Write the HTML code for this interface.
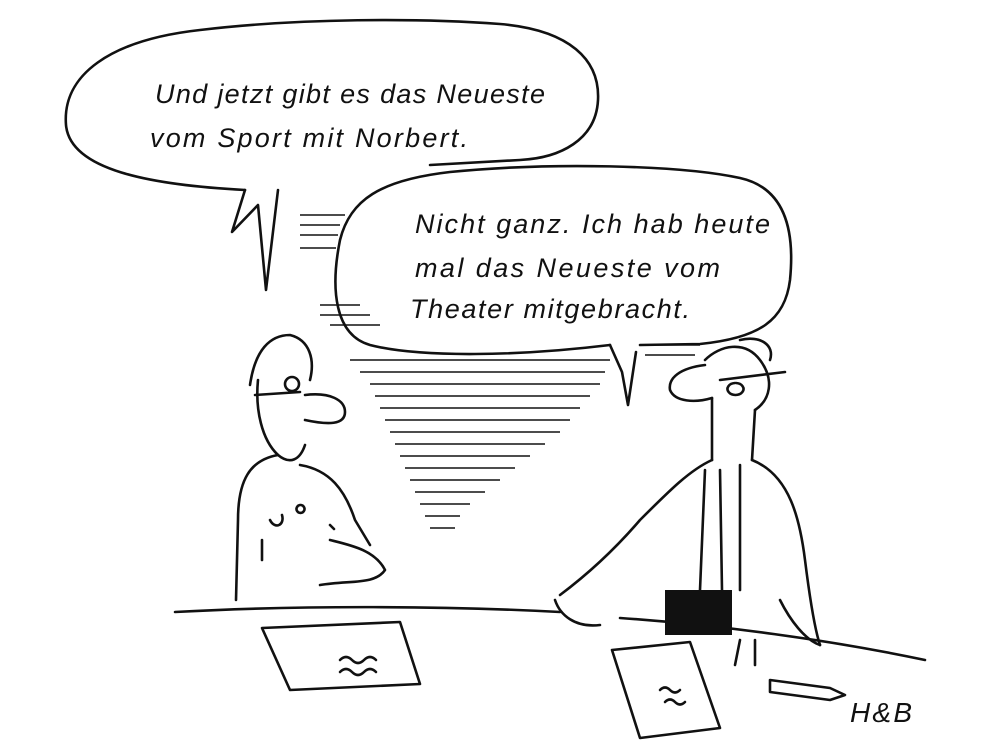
<!DOCTYPE html>
<html><head><meta charset="utf-8"><style>
html,body{margin:0;padding:0;background:#fff}
svg{display:block}
text{font-family:"Liberation Sans",sans-serif;font-style:italic;fill:#111}
</style></head><body>
<svg width="1000" height="751" viewBox="0 0 1000 751" xmlns="http://www.w3.org/2000/svg">
<g fill="none" stroke="#111" stroke-width="2.6" stroke-linecap="round" stroke-linejoin="round">
<!-- bubble 1 -->
<path d="M245,190 C150,185 70,170 66,125 C62,75 110,40 200,30 C300,18 420,18 500,24 C570,30 600,60 598,100 C596,140 560,158 520,160 L430,165"/>
<path d="M245,190 L232,232 L258,205 L266,290 L278,190"/>
<!-- bubble 2 -->
<path d="M610,345 C520,356 420,358 370,345 C335,335 330,290 340,240 C350,200 380,180 450,172 C550,162 680,165 740,178 C785,188 795,230 790,280 C785,320 760,338 700,344 L640,345"/>
<path d="M610,345 L622,372 L628,405 L636,352"/>
<!-- woman -->
<path d="M250,385 C255,350 270,335 290,335 C310,340 315,360 310,380"/>
<path d="M258,380 C255,410 262,440 278,455 C290,465 300,460 305,445"/>
<path d="M305,395 C330,392 345,400 345,412 C345,425 328,425 305,420"/>
<circle cx="292" cy="384" r="7"/>
<path d="M255,395 L300,392"/>
<path d="M278,455 C250,460 238,480 238,520 L236,600"/>
<path d="M300,465 C330,470 345,490 355,520 L370,545"/>
<path d="M330,540 C350,545 375,550 385,570 C375,585 350,580 320,585"/>
<path d="M270,520 C275,530 285,525 282,515 M300,505 a4,4 0 1,0 1,0 M262,540 L262,560 M330,525 l4,4"/>
<!-- man -->
<path d="M740,340 C760,335 775,345 770,360"/>
<path d="M705,360 C720,345 745,340 760,360 C775,380 770,400 755,410"/>
<path d="M705,365 C680,368 668,378 670,390 C675,402 695,403 712,398"/>
<path d="M720,380 L785,372 M735,383 a8,6 0 1,0 1,0"/>
<path d="M712,398 L712,460 M755,410 L752,460"/>
<path d="M712,460 C690,470 670,490 640,520 C610,555 580,580 560,595"/>
<path d="M752,460 C790,475 800,520 805,560 C810,600 815,630 820,645"/>
<path d="M705,470 L700,590 M740,465 L740,590 M720,470 L722,590"/>
<path d="M555,600 C560,615 575,628 600,625 M780,600 C790,620 805,640 820,645 M740,640 L735,665 M755,640 L755,665"/>
<!-- desk -->
<path d="M175,612 C300,605 450,606 560,612 M620,618 C720,625 830,640 925,660"/>
<!-- papers -->
<path d="M262,628 L400,622 L420,684 L290,690 Z"/>
<path d="M340,660 q6,-6 12,0 q6,6 12,0 q6,-6 12,0 M340,672 q6,-6 12,0 q6,6 12,0 q6,-6 12,0"/>
<path d="M612,650 L690,642 L720,728 L640,738 Z"/>
<path d="M660,690 q5,-5 10,0 q5,5 10,0 M665,702 q5,-5 10,0 q5,5 10,0"/>
<!-- pen -->
<path d="M770,680 L830,688 L845,695 L830,700 L770,692 Z"/>
</g>
<!-- hatching -->
<g stroke="#111" stroke-width="1.6">
<line x1="300" y1="215" x2="345" y2="215"/><line x1="300" y1="225" x2="340" y2="225"/>
<line x1="300" y1="235" x2="338" y2="235"/><line x1="300" y1="248" x2="336" y2="248"/>
<line x1="320" y1="305" x2="360" y2="305"/><line x1="320" y1="315" x2="370" y2="315"/>
<line x1="330" y1="325" x2="380" y2="325"/><line x1="350" y1="360" x2="610" y2="360"/>
<line x1="360" y1="372" x2="605" y2="372"/><line x1="370" y1="384" x2="600" y2="384"/>
<line x1="375" y1="396" x2="590" y2="396"/><line x1="380" y1="408" x2="580" y2="408"/>
<line x1="385" y1="420" x2="570" y2="420"/><line x1="390" y1="432" x2="560" y2="432"/>
<line x1="395" y1="444" x2="545" y2="444"/><line x1="400" y1="456" x2="530" y2="456"/>
<line x1="405" y1="468" x2="515" y2="468"/><line x1="410" y1="480" x2="500" y2="480"/>
<line x1="415" y1="492" x2="485" y2="492"/><line x1="420" y1="504" x2="470" y2="504"/>
<line x1="425" y1="516" x2="460" y2="516"/><line x1="430" y1="528" x2="455" y2="528"/>
<line x1="640" y1="345" x2="700" y2="345"/><line x1="645" y1="355" x2="695" y2="355"/>
</g>
<rect x="665" y="590" width="67" height="45" fill="#111"/>
<text x="155" y="103" font-size="27" textLength="390">Und jetzt gibt es das Neueste</text>
<text x="150" y="147" font-size="27" textLength="318">vom Sport mit Norbert.</text>
<text x="415" y="233" font-size="27" textLength="355">Nicht ganz. Ich hab heute</text>
<text x="415" y="277" font-size="27" textLength="305">mal das Neueste vom</text>
<text x="410" y="318" font-size="27" textLength="280">Theater mitgebracht.</text>
<text x="850" y="722" font-size="28" textLength="62">H&amp;B</text>
</svg>
</body></html>
